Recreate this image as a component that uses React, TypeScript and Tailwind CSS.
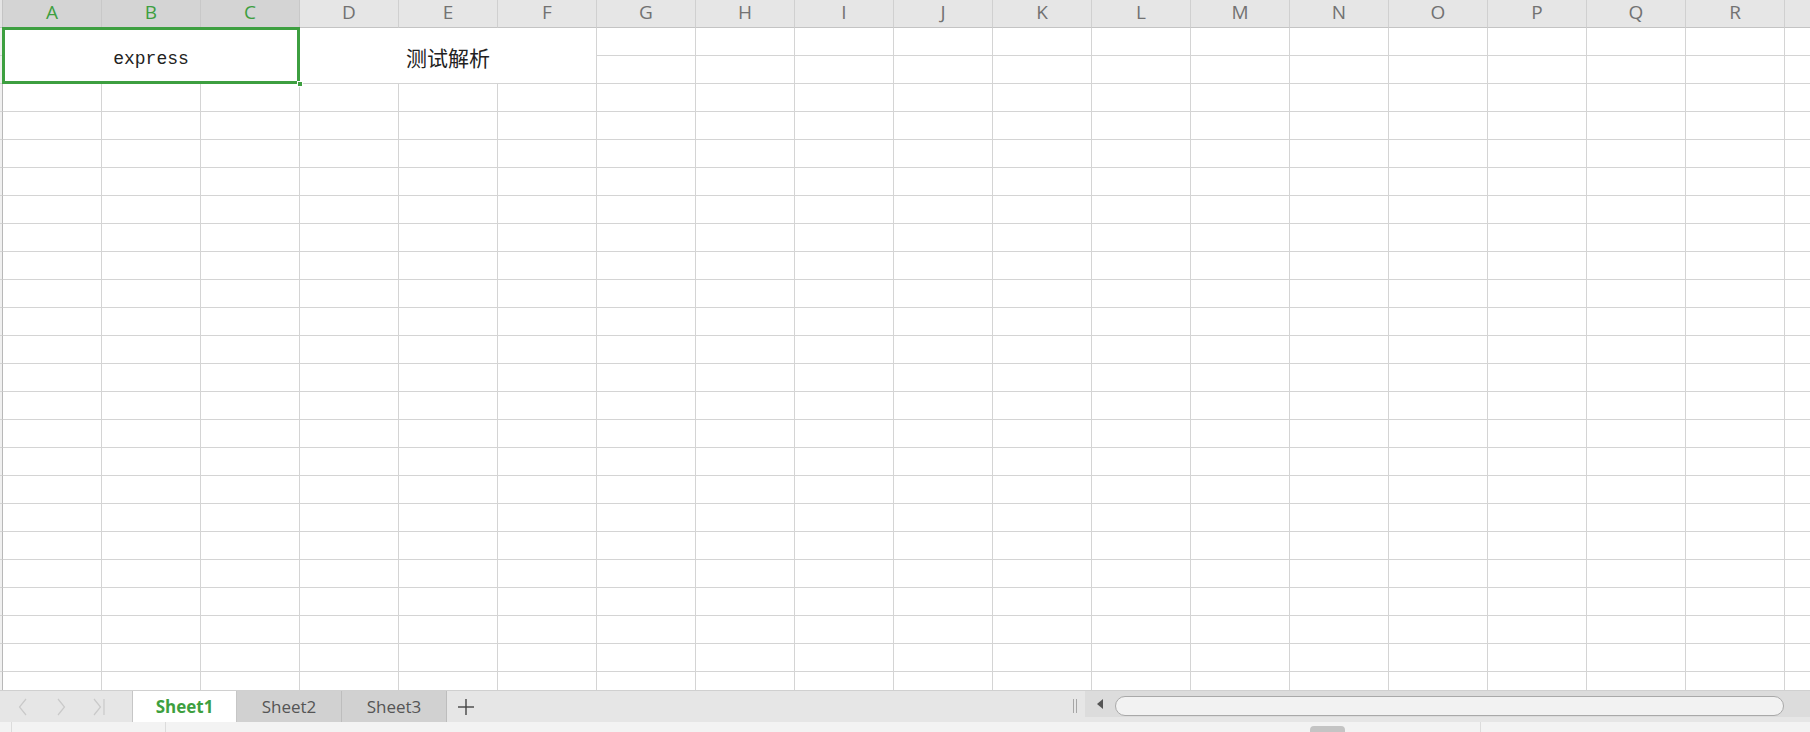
import { Fragment } from 'react'

const COLS = ['A', 'B', 'C', 'D', 'E', 'F', 'G', 'H', 'I', 'J', 'K', 'L', 'M', 'N', 'O', 'P', 'Q', 'R']
const ROW_COUNT = 24

function NavArrows() {
  return (
    <div className="w-[132px] flex items-center text-[#c9c9c9]">
      <svg width="10" height="18" viewBox="0 0 10 18" className="ml-[18px]">
        <polyline points="8,1 1.5,9 8,17" fill="none" stroke="currentColor" strokeWidth="1.2" />
      </svg>
      <svg width="10" height="18" viewBox="0 0 10 18" className="ml-[28px]">
        <polyline points="2,1 8.5,9 2,17" fill="none" stroke="currentColor" strokeWidth="1.2" />
      </svg>
      <svg width="14" height="18" viewBox="0 0 14 18" className="ml-[26px]">
        <polyline points="2,1 8.5,9 2,17" fill="none" stroke="currentColor" strokeWidth="1.2" />
        <line x1="12" y1="1" x2="12" y2="17" stroke="currentColor" strokeWidth="1.2" />
      </svg>
    </div>
  )
}

function SheetTab({ name, active }: { name: string; active?: boolean }) {
  return (
    <div
      className={[
        'w-[105px] flex items-center justify-center text-[17px] font-["Open_Sans",sans-serif]',
        active
          ? 'bg-white text-[#3d9f40] font-bold border-x border-[#c6c6c6]'
          : 'bg-[#d1d1d1] text-[#555] border-r border-[#bdbdbd]',
      ].join(' ')}
    >
      {name}
    </div>
  )
}

export default function App() {
  const bodyRows: number[] = Array.from({ length: ROW_COUNT }, (_, i) => i + 1)

  return (
    <div className="h-screen w-full flex flex-col bg-white overflow-hidden">
      {/* sheet grid */}
      <div className="flex-1 overflow-hidden">
        <div className="grid grid-cols-[3px_repeat(18,99px)_1fr] grid-rows-[28px_repeat(24,28px)]">
          {/* column header */}
          <div className="bg-[#e4e4e4] border-b border-r border-[#c4c4c4]" />
          {COLS.map((c, i) => (
            <div
              key={c}
              className={[
                'flex items-center justify-center pb-[2px] border-b border-r text-[19px] font-["Open_Sans",sans-serif]',
                i < 3
                  ? 'bg-[#d4d4d4] text-[#3d9f40] border-b-[#c4c4c4] border-r-[#c8c8c8]'
                  : 'bg-[#e6e6e6] text-[#727272] border-b-[#c4c4c4] border-r-[#d0d0d0]',
              ].join(' ')}
            >
              {c}
            </div>
          ))}
          <div className="bg-[#e6e6e6] border-b border-[#c4c4c4]" />

          {bodyRows.map((r) => (
            <Fragment key={r}>
              <div className="bg-[#f0f0f0] border-r border-b border-r-[#b8b8b8] border-b-[#d4d4d4]" />
              {r === 1 && (
                <>
                  <div className="col-span-3 row-span-2 relative flex items-center justify-center pt-[8px] border-r border-b border-[#d4d4d4] font-['Liberation_Mono',monospace] text-[18px] text-[#222]">
                    express
                    <div className="absolute -left-px -top-px -right-px -bottom-px border-[3px] border-[#3d9f40]" />
                    <div className="absolute -right-[4px] -bottom-[4px] w-[6px] h-[6px] bg-[#3d9f40] border border-white" />
                  </div>
                  <div className="col-span-3 row-span-2 flex items-center justify-center pt-[4px] border-r border-b border-[#d4d4d4] font-['Noto_Sans_CJK_SC',sans-serif] text-[21px] text-[#222]">
                    测试解析
                  </div>
                </>
              )}
              {COLS.map((c, i) =>
                r <= 2 && i < 6 ? null : (
                  <div key={c} className="border-r border-b border-[#d4d4d4]" />
                ),
              )}
              <div className="border-b border-[#d4d4d4]" />
            </Fragment>
          ))}
        </div>
      </div>

      {/* sheet tabs + horizontal scroll */}
      <div className="h-[32px] flex bg-[#e6e6e6] border-t border-[#d0d0d0]">
        <NavArrows />
        <SheetTab name="Sheet1" active />
        <SheetTab name="Sheet2" />
        <SheetTab name="Sheet3" />
        <div className="w-[38px] flex items-center justify-center">
          <svg width="16" height="16" viewBox="0 0 16 16">
            <line x1="8" y1="0" x2="8" y2="16" stroke="#444" strokeWidth="1.4" />
            <line x1="0" y1="8" x2="16" y2="8" stroke="#444" strokeWidth="1.4" />
          </svg>
        </div>
        <div className="flex-1" />
        <div className="w-[12px] flex items-center gap-[2px] mb-[2px]">
          <div className="w-px h-[14px] bg-[#a6a6a6]" />
          <div className="w-px h-[14px] bg-[#a6a6a6]" />
        </div>
        <div className="w-[725px] h-[26px] flex bg-[#dcdcdc]">
          <div className="w-[30px] flex items-center justify-center">
            <svg width="6" height="10" viewBox="0 0 6 10">
              <polygon points="6,0 0,5 6,10" fill="#555" />
            </svg>
          </div>
          <div className="flex-1 mt-[5px] h-[20px] rounded-full bg-[#f2f2f2] border border-[#a9a9a9]" />
          <div className="w-[26px]" />
        </div>
      </div>

      {/* status strip */}
      <div className="h-[10px] flex bg-[#f3f3f3]">
        <div className="w-[12px] border-r border-[#dcdcdc]" />
        <div className="w-[154px] border-r border-[#dcdcdc]" />
        <div className="w-[1144px]" />
        <div className="w-[35px] mt-[4px] rounded-t-[4px] bg-[#c4c4c4]" />
        <div className="w-[136px] border-r border-[#dcdcdc]" />
        <div className="flex-1" />
      </div>
    </div>
  )
}
